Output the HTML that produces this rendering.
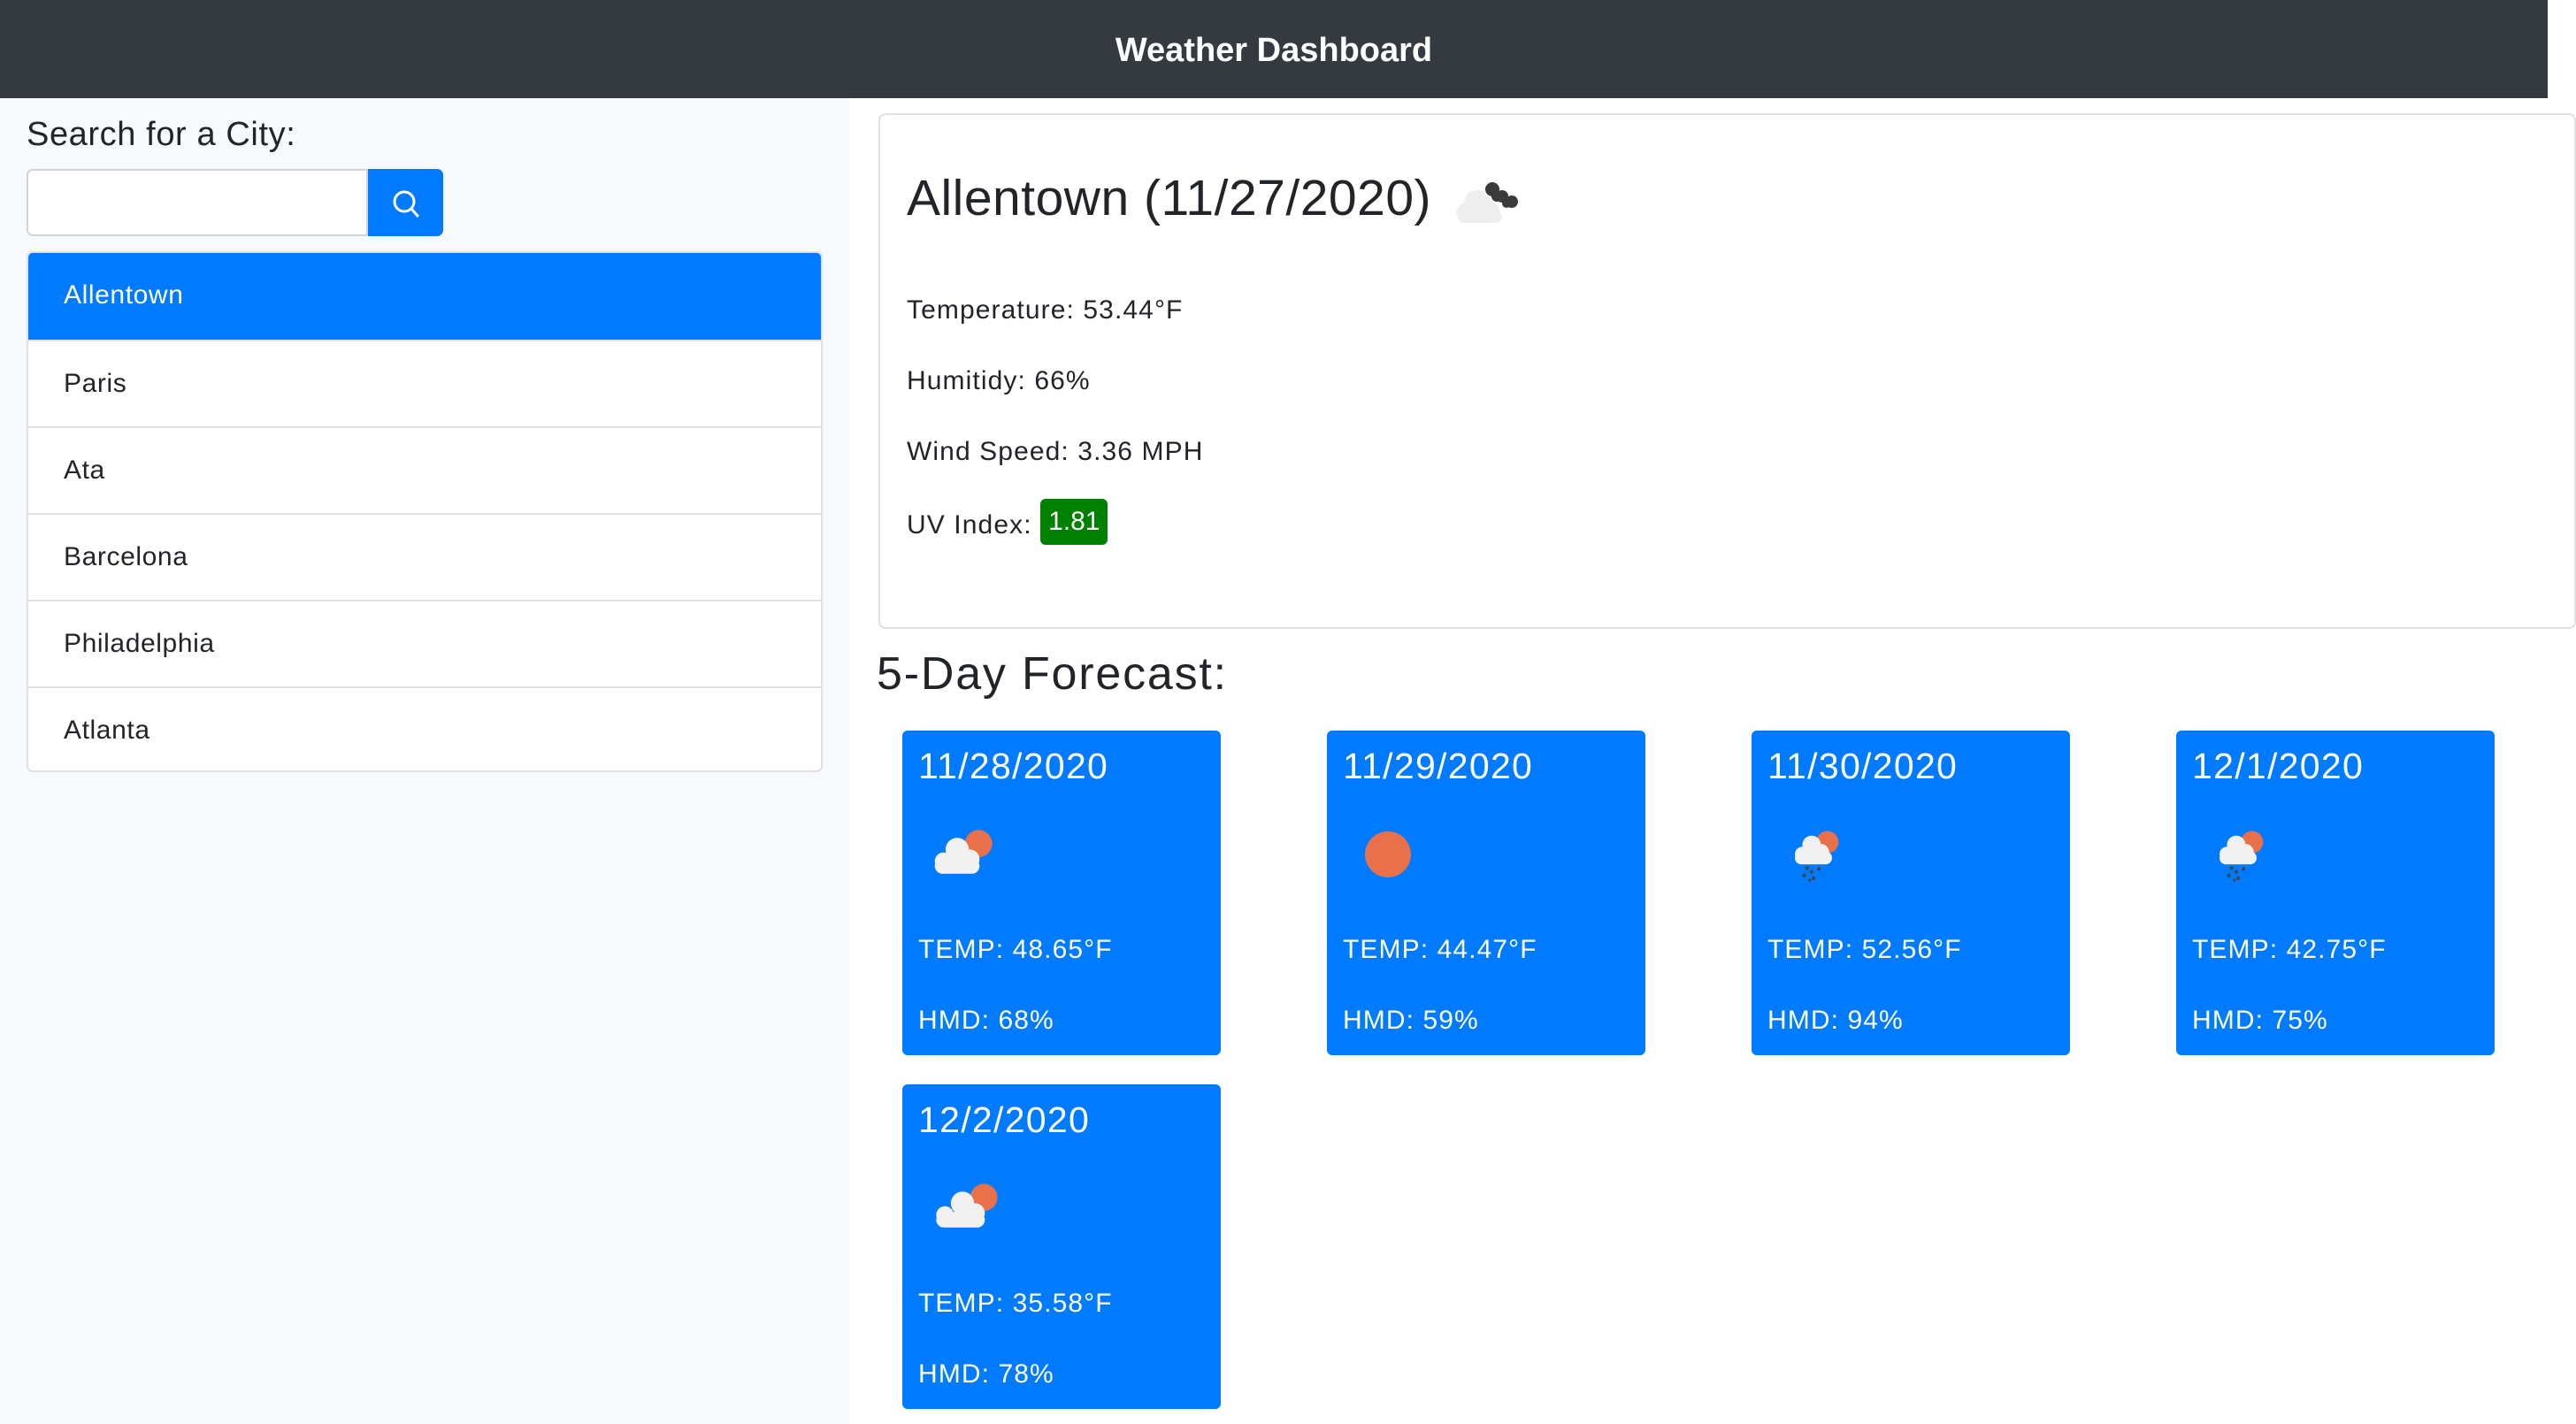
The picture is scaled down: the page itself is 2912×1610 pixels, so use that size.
<!DOCTYPE html>
<html><head><meta charset="utf-8"><style>
*{box-sizing:border-box;margin:0;padding:0}
body{width:2912px;height:1610px;background:#fff;font-family:"Liberation Sans",Arial,sans-serif;color:#212529;position:relative;overflow:hidden}
.abs{position:absolute}
.hdr{left:0;top:0;width:2880px;height:111px;background:#343a40;color:#fff;font-size:38px;font-weight:bold;text-align:center;line-height:114px}
.side{left:0;top:111px;width:960px;height:1499px;background:#f8f9fa}
.list{left:30px;top:284px;width:900px;height:589px;border:2px solid #dfe1e4;border-radius:7px;background:#fff;overflow:hidden}
.item{height:98px;border-top:2px solid #dfe1e4;font-size:30px;line-height:96px;padding-left:40px;letter-spacing:0.6px}
.item:first-child{border-top:none;background:#007bff;color:#fff}
.card{left:993px;top:128px;width:1919px;height:583px;border:2px solid #dfe1e4;border-radius:8px}
.fc{width:360px;height:367px;background:#007bff;border-radius:6px;color:#fff}
.fc .d{position:absolute;left:18px;top:17px;font-size:41px;letter-spacing:1.3px}
.fc .l1{position:absolute;left:18px;top:231px;font-size:30px;letter-spacing:1.1px}
.fc .l2{position:absolute;left:18px;top:311px;font-size:30px;letter-spacing:1.1px}
.fc svg{position:absolute;left:28px;top:108px}
p.s{position:absolute;left:1025px;font-size:30px;letter-spacing:1.1px}
</style></head><body>
<div class="abs hdr">Weather Dashboard</div>
<div class="abs side"></div>
<div class="abs" style="left:30px;top:131px;font-size:38px;letter-spacing:0.6px">Search for a City:</div>
<div class="abs" style="left:30px;top:191px;width:386px;height:76px;background:#fff;border:2px solid #ced4da;border-radius:7px 0 0 7px"></div>
<div class="abs" style="left:416px;top:191px;width:85px;height:76px;background:#007bff;border-radius:0 7px 7px 0">
<svg width="85" height="76" viewBox="0 0 85 76"><circle cx="41" cy="37" r="11" fill="none" stroke="#fff" stroke-width="3"/><line x1="49" y1="45" x2="56" y2="53" stroke="#fff" stroke-width="3" stroke-linecap="round"/></svg></div>
<div class="abs list">
<div class="item">Allentown</div><div class="item">Paris</div><div class="item">Ata</div><div class="item">Barcelona</div><div class="item">Philadelphia</div><div class="item">Atlanta</div>
</div>
<div class="abs card"></div>
<div class="abs" style="left:1025px;top:191px;font-size:57px;letter-spacing:0.5px">Allentown (11/27/2020)</div>
<svg class="abs" style="left:1640px;top:200px" width="85" height="56" viewBox="0 0 85 56"><g fill="#eeeeee"><circle cx="30" cy="30" r="15"/><circle cx="18" cy="40" r="11"/><circle cx="44" cy="38" r="11"/><rect x="8" y="38" width="50" height="14" rx="7"/></g><g fill="#3a3a3a"><circle cx="47" cy="14" r="8"/><circle cx="58" cy="22" r="7"/><circle cx="69" cy="28" r="7"/><circle cx="52" cy="22" r="6"/><circle cx="63" cy="30" r="5"/></g></svg>
<p class="s" style="top:334px">Temperature: 53.44°F</p>
<p class="s" style="top:414px">Humitidy: 66%</p>
<p class="s" style="top:494px">Wind Speed: 3.36 MPH</p>
<p class="s" style="top:574px">UV Index: <span style="display:inline-block;background:#008000;color:#fff;border-radius:6px;padding:7px 9px;line-height:38px;vertical-align:middle;margin-top:-10px;letter-spacing:0">1.81</span></p>
<div class="abs" style="left:991px;top:732px;font-size:52px;letter-spacing:1.8px">5-Day Forecast:</div>

<div class="abs fc" style="left:1020px;top:826px"><div class="d">11/28/2020</div>
<svg width="90" height="66" viewBox="0 0 80 60"><circle cx="52" cy="18" r="14" fill="#e8704a"/><g fill="#f1f1f1"><circle cx="30" cy="24" r="12"/><circle cx="16" cy="36" r="9"/><circle cx="43" cy="34" r="10"/><rect x="7" y="33" width="46" height="16" rx="8"/></g></svg>
<div class="l1">TEMP: 48.65°F</div><div class="l2">HMD: 68%</div></div>

<div class="abs fc" style="left:1500px;top:826px"><div class="d">11/29/2020</div>
<svg width="80" height="70" viewBox="0 0 80 70" style="top:100px"><ellipse cx="41" cy="40" rx="26" ry="26" fill="#e8704a"/></svg>
<div class="l1">TEMP: 44.47°F</div><div class="l2">HMD: 59%</div></div>

<div class="abs fc" style="left:1980px;top:826px"><div class="d">11/30/2020</div>
<svg width="84" height="74" viewBox="0 0 80 70"><circle cx="55" cy="17" r="12" fill="#e8704a"/><g fill="#f1f1f1"><circle cx="38" cy="20" r="10"/><circle cx="28" cy="30" r="8"/><circle cx="48" cy="28" r="9"/><rect x="20" y="27" width="40" height="14" rx="7"/></g><g fill="#444"><circle cx="33" cy="45" r="2"/><circle cx="38" cy="49" r="2"/><circle cx="46" cy="46" r="2"/><circle cx="30" cy="53" r="2"/><circle cx="40" cy="56" r="2"/><circle cx="36" cy="58" r="1.5"/></g></svg>
<div class="l1">TEMP: 52.56°F</div><div class="l2">HMD: 94%</div></div>

<div class="abs fc" style="left:2460px;top:826px"><div class="d">12/1/2020</div>
<svg width="84" height="74" viewBox="0 0 80 70"><circle cx="55" cy="17" r="12" fill="#e8704a"/><g fill="#f1f1f1"><circle cx="38" cy="20" r="10"/><circle cx="28" cy="30" r="8"/><circle cx="48" cy="28" r="9"/><rect x="20" y="27" width="40" height="14" rx="7"/></g><g fill="#444"><circle cx="33" cy="45" r="2"/><circle cx="38" cy="49" r="2"/><circle cx="46" cy="46" r="2"/><circle cx="30" cy="53" r="2"/><circle cx="40" cy="56" r="2"/><circle cx="36" cy="58" r="1.5"/></g></svg>
<div class="l1">TEMP: 42.75°F</div><div class="l2">HMD: 75%</div></div>

<div class="abs fc" style="left:1020px;top:1226px"><div class="d">12/2/2020</div>
<svg width="88" height="66" viewBox="0 0 80 60" style="left:24px"><circle cx="62" cy="18" r="14" fill="#e8704a"/><g fill="#f1f1f1"><circle cx="40" cy="24" r="12"/><circle cx="22" cy="36" r="9"/><circle cx="53" cy="34" r="10"/><rect x="13" y="33" width="50" height="16" rx="8"/></g></svg>
<div class="l1">TEMP: 35.58°F</div><div class="l2">HMD: 78%</div></div>
</body></html>
